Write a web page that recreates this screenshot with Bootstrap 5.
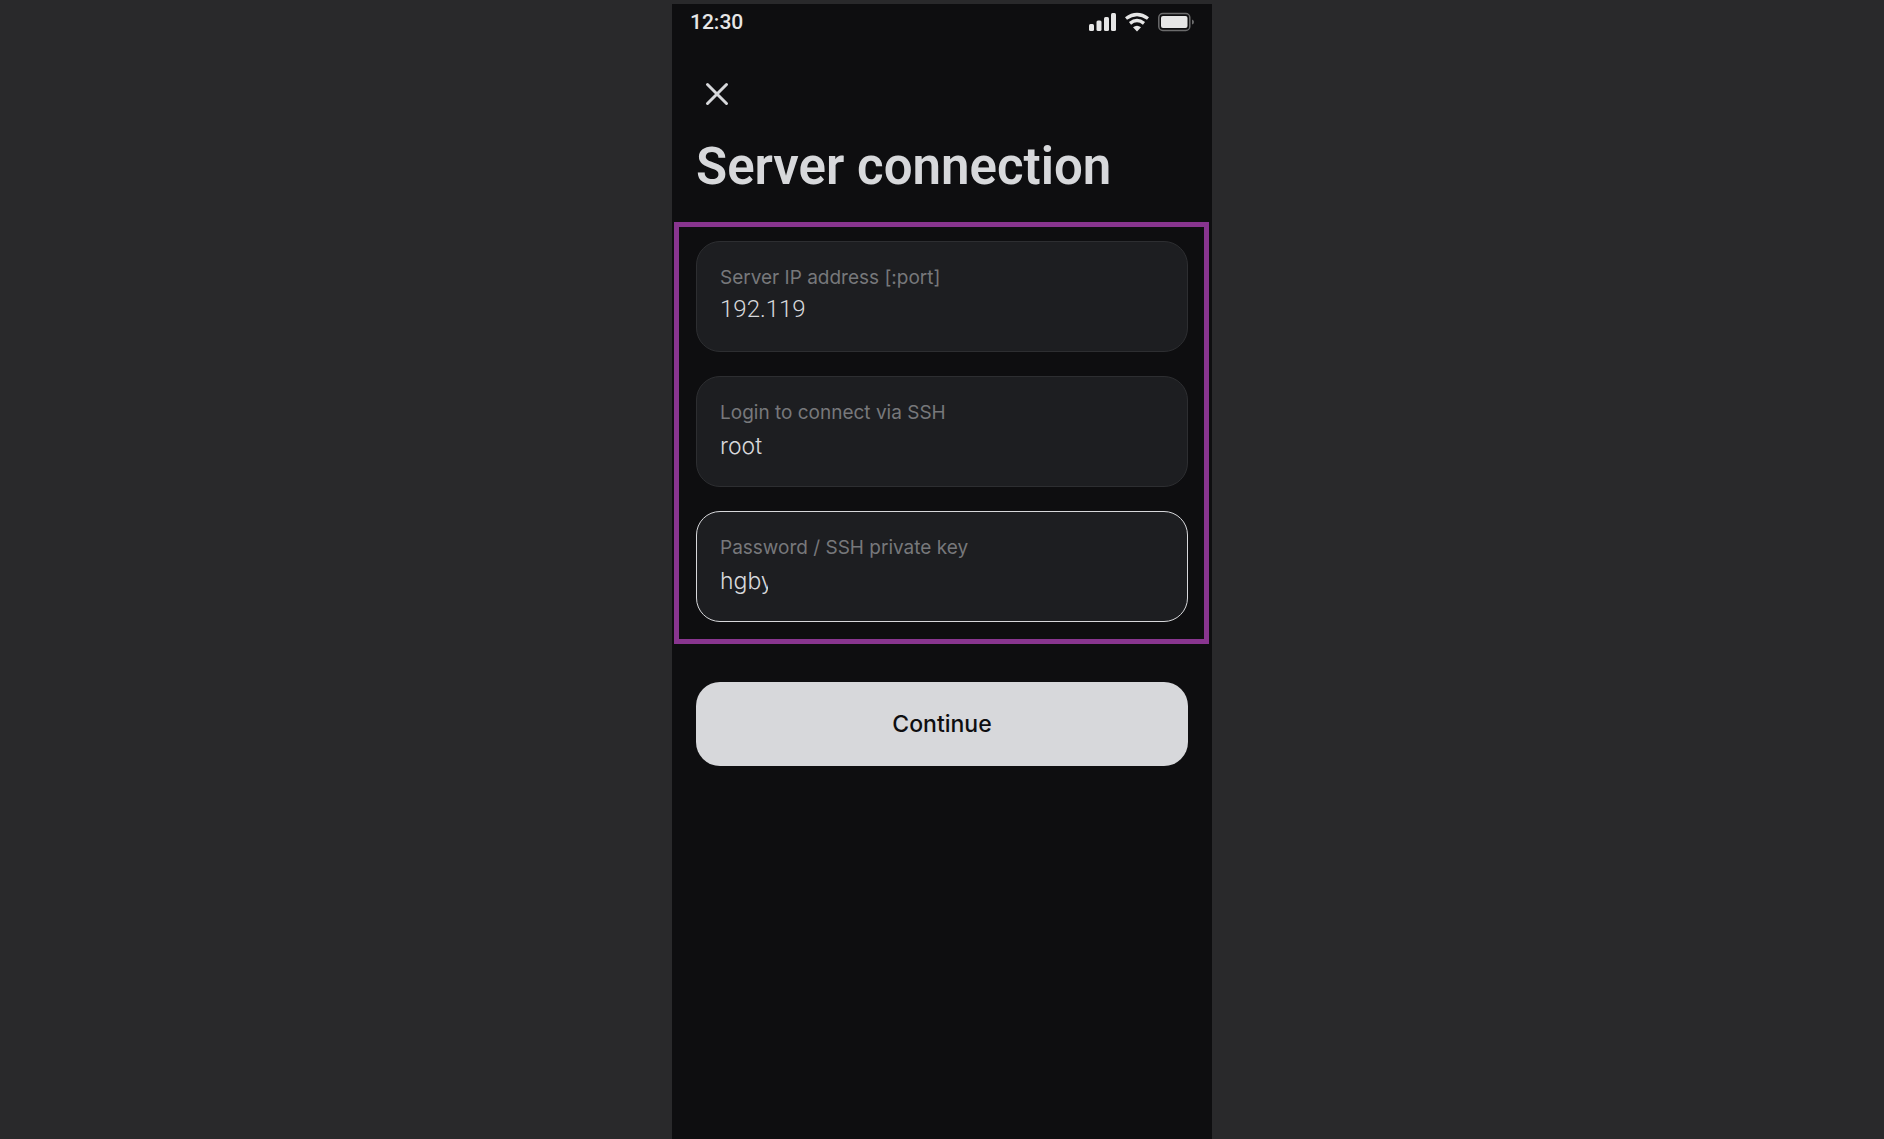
<!DOCTYPE html>
<html lang="en">
<head>
<meta charset="utf-8">
<meta name="viewport" content="width=device-width, initial-scale=1">
<title>Server connection</title>
<link href="https://cdn.jsdelivr.net/npm/bootstrap@5.3.0/dist/css/bootstrap.min.css" rel="stylesheet">
<style>
body { background: #29292b; color: #d7d8db; font-family: Inter, "Liberation Sans", sans-serif; }
.phone { width: 100%; max-width: 540px; background: #0e0e10; }
.status-bar { padding: 4px 18px 0; height: 32px; }
.clock { font: 500 21px/28px Roboto, sans-serif; color: #e6e6e6; }
.close-btn { width: 40px; height: 40px; margin: 38px 0 0 25px; color: #d7d8db; }
.page-title { font: 600 51px/60px Roboto, sans-serif; margin: 23px 24px 25px; }
.field-group { border: 5px solid #88358f; margin: 0 3px 0 2px; padding: 14px 16px 17px 17px; gap: 24px; }
.field-box { background: #1d1e21; border: 1px solid #2d2e31; border-radius: 24px; height: 111px; padding: 23px 23px 0; }
.field-box.active-box { border-color: #d7d8db; }
.field-box label { color: #77787b; font-size: 19px; line-height: 26px; }
.field-box input { background: transparent; border: 0; outline: 0; padding: 0; color: #d7d8db; font-size: 23px; font-weight: 300; height: 40px; }
.field-box .address { font: 300 24px/34px Roboto, sans-serif; width: 86px; height: 36px; }
.field-box .secret { width: 48px; }
.continue-btn { margin: 38px 24px 0; height: 84px; border-radius: 24px; background: #d7d8db; color: #0e0e10; font-size: 23px; font-weight: 500; }
</style>
</head>
<body>
<div class="min-vh-100 d-flex justify-content-center pt-1">
  <main class="phone d-flex flex-column">
    <header class="status-bar d-flex justify-content-between">
      <span class="clock">12:30</span>
      <div class="d-flex align-items-start pt-1">
        <svg width="106" height="20" viewBox="0 0 106 20" fill="#e6e6e6" aria-hidden="true">
          <rect x="1" y="12" width="5" height="7" rx="1.500"/><rect x="8.500" y="8.500" width="5" height="10.500" rx="1.500"/><rect x="16" y="5" width="5" height="14" rx="1.500"/><rect x="23" y="1" width="5" height="18" rx="1.500"/>
          <g fill="none" stroke="#e6e6e6" stroke-width="3.400"><path d="M38 6.500q11-8 22 0M42 11.300q7-5.500 14 0"/></g><path d="M45 15.200q4-3 8 0L49 19.500z"/>
          <rect x="70.800" y="1.600" width="31" height="16.800" rx="4" fill="none" stroke="#6b6b6c" stroke-width="1.500"/><rect x="73" y="4" width="26.500" height="12" rx="2"/><path d="M104 7.500q2 .5 2 2.500t-2 2.500z" fill="#6b6b6c"/>
        </svg>
      </div>
    </header>
    <button type="button" class="close-btn btn p-0 border-0 d-flex align-items-center justify-content-center" aria-label="Close">
      <svg width="24" height="24" viewBox="0 0 24 24" fill="none" stroke="currentColor" stroke-width="3" stroke-linecap="round"><path d="M2.500 2.500l19 19M21.500 2.500l-19 19"/></svg>
    </button>
    <h1 class="page-title">Server connection</h1>
    <form class="d-flex flex-column">
      <div class="field-group d-flex flex-column">
        <div class="field-box d-flex flex-column align-items-start">
          <label for="address">Server IP address [:port]</label>
          <input id="address" class="address" type="text" value="192.119.">
        </div>
        <div class="field-box d-flex flex-column align-items-start">
          <label for="login">Login to connect via SSH</label>
          <input id="login" class="w-100" type="text" value="root">
        </div>
        <div class="field-box active-box d-flex flex-column align-items-start">
          <label for="secret">Password / SSH private key</label>
          <input id="secret" class="secret" type="text" value="hgby">
        </div>
      </div>
      <button type="button" class="continue-btn btn border-0">Continue</button>
    </form>
  </main>
</div>
<script src="https://cdn.jsdelivr.net/npm/bootstrap@5.3.0/dist/js/bootstrap.bundle.min.js"></script>
</body>
</html>
